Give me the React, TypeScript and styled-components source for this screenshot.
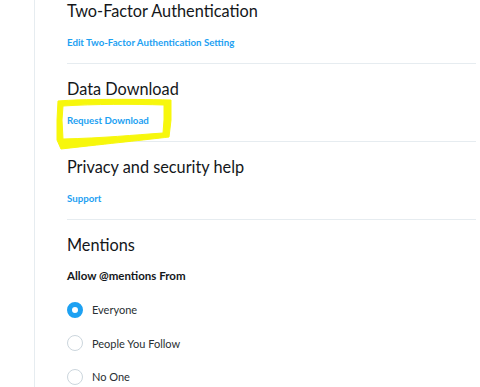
import React from 'react'
import styled, { createGlobalStyle } from 'styled-components'

const GlobalStyle = createGlobalStyle`
  html, body {
    margin: 0;
    padding: 0;
    background: #ffffff;
  }
  body {
    font-family: Lato, "Noto Sans", sans-serif;
    overflow: hidden;
  }
`

const Page = styled.div`
  display: flex;
  height: 387px;
  overflow: hidden;
`

const Rail = styled.div`
  width: 34px;
  flex: none;
  border-right: 1px solid #e6ecf0;
`

const Main = styled.main`
  flex: 1;
  padding: 0 4px 0 32px;
  margin-top: -14px;
`

const Section = styled.section<{ $last?: boolean }>`
  position: relative;
  padding: 13px 0 13px;
  border-bottom: ${p => (p.$last ? 'none' : '1px solid #e6ecf0')};
`

const Title = styled.h2`
  margin: 0;
  font-size: 16.3px;
  line-height: 24px;
  font-weight: 400;
  color: #14171a;
`

const Action = styled.a`
  display: block;
  margin-top: 11px;
  font-size: 9.7px;
  line-height: 16px;
  font-weight: 700;
  color: #1da1f2;
  text-decoration: none;
`

const Label = styled.div`
  margin-top: 11px;
  font-size: 11.5px;
  line-height: 16px;
  font-weight: 700;
  color: #14171a;
`

const Options = styled.div`
  display: flex;
  flex-direction: column;
  margin-top: 9px;
`

const Option = styled.label`
  display: flex;
  align-items: center;
  gap: 9px;
  height: 33.5px;
  font-size: 11px;
  color: #292f33;
`

const Radio = styled.span<{ $checked?: boolean }>`
  width: 16px;
  height: 16px;
  box-sizing: border-box;
  border-radius: 50%;
  flex: none;
  border: ${p => (p.$checked ? '5.5px solid #1da1f2' : '1px solid #ccd6dd')};
  background: #ffffff;
`

const Scribble = styled.svg`
  position: absolute;
  left: -13px;
  top: 33px;
  overflow: visible;
  pointer-events: none;
`

const Highlight = () => (
  <Scribble width="124" height="56" viewBox="0 0 124 56">
    <path
      fillRule="evenodd"
      fill="#f7f70c"
      stroke="#f7f70c"
      strokeWidth="1"
      strokeLinejoin="round"
      d="M4 4 C30 2 70 2 117 3 L117 23 L115 40 C90 43 60 46 7 52 L3 43 L3 23 Z M9 9 C40 7 80 7 110 8 L110 23 L109 36 C80 38 50 41 9 42 L8 23 Z"
    />
  </Scribble>
)

const options = ['Everyone', 'People You Follow', 'No One']

const App: React.FC = () => {
  return (
    <>
      <GlobalStyle />
      <Page>
        <Rail />
        <Main>
          <Section>
            <Title>Two-Factor Authentication</Title>
            <Action href="#">Edit Two-Factor Authentication Setting</Action>
          </Section>
          <Section>
            <Title>Data Download</Title>
            <Action href="#">Request Download</Action>
            <Highlight />
          </Section>
          <Section>
            <Title>Privacy and security help</Title>
            <Action href="#">Support</Action>
          </Section>
          <Section $last>
            <Title>Mentions</Title>
            <Label>Allow @mentions From</Label>
            <Options>
              {options.map((o, i) => (
                <Option key={o}>
                  <Radio $checked={i === 0} />
                  {o}
                </Option>
              ))}
            </Options>
          </Section>
        </Main>
      </Page>
    </>
  )
}

export default App
